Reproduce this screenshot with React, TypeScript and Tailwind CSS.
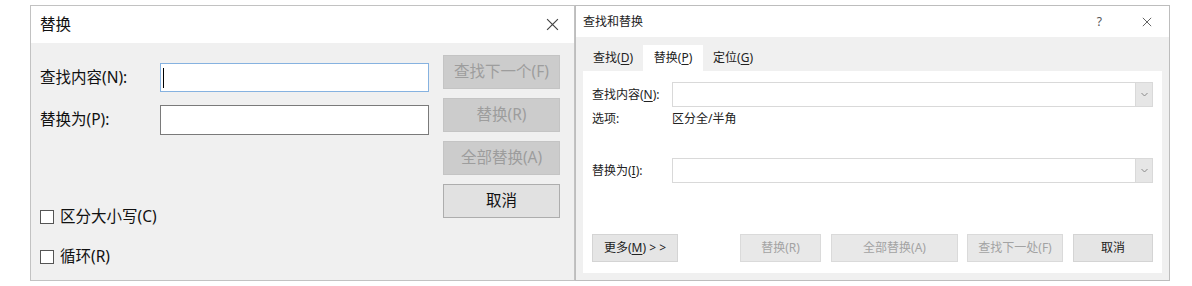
import React from "react";

const font = "font-['Noto_Sans','Noto_Sans_CJK_SC',sans-serif]";

const CloseIcon = ({size, color}: {size: number; color: string}) => (
    <svg width={size} height={size} viewBox="0 0 12 12" fill="none">
        <path d="M1 1L11 11M11 1L1 11" stroke={color} strokeWidth="1.1"/>
    </svg>
);

const Chevron = () => (
    <svg width="7" height="5" viewBox="0 0 7 5" fill="none">
        <path d="M0.5 1L3.5 4L6.5 1" stroke="#8a8a8a" strokeWidth="1"/>
    </svg>
);

// Left: simple Windows "替换" dialog
const ReplaceDialog: React.FC = () => {
    const disabled = ['查找下一个(F)', '替换(R)', '全部替换(A)'];

    return (
        <div className="w-[545px] h-[276px] border border-[#c2c2c2] bg-[#f0f0f0] flex flex-col text-[15.5px] text-[#111]">
            {/* Title bar */}
            <div className="h-[37px] bg-white flex items-center justify-between pl-[9px] pr-[15px] shrink-0">
                <span className="leading-none">替换</span>
                <CloseIcon size={13} color="#444"/>
            </div>

            <div className="flex flex-1">
                {/* Fields + options */}
                <div className="flex flex-col pl-[9px] pt-[20px]">
                    <div className="flex items-center h-[29px]">
                        <span className="w-[120px] leading-none">查找内容(N):</span>
                        <div className="w-[269px] h-[29px] bg-white border border-[#86b2e0] flex items-center pl-[2px]">
                            <div className="w-px h-[20px] bg-black"/>
                        </div>
                    </div>
                    <div className="flex items-center h-[30px] mt-[13px]">
                        <span className="w-[120px] leading-none">替换为(P):</span>
                        <div className="w-[269px] h-[30px] bg-white border border-[#7a7a7a]"/>
                    </div>

                    <label className="flex items-center h-[20px] mt-[72px] gap-[6px]">
                        <span className="w-[14px] h-[14px] border border-[#555] bg-white"/>
                        <span className="leading-none">区分大小写(C)</span>
                    </label>
                    <label className="flex items-center h-[20px] mt-[20px] gap-[6px]">
                        <span className="w-[14px] h-[14px] border border-[#555] bg-white"/>
                        <span className="leading-none">循环(R)</span>
                    </label>
                </div>

                {/* Buttons */}
                <div className="flex flex-col gap-[9px] ml-[14px] pt-[12px]">
                    {disabled.map((label) => (
                        <button
                            key={label}
                            disabled
                            className="w-[117px] h-[34px] bg-[#cccccc] border border-[#c4c4c4] text-[#9d9d9d] leading-none"
                        >
                            {label}
                        </button>
                    ))}
                    <button className="w-[117px] h-[34px] bg-[#e1e1e1] border border-[#adadad] text-[#111] leading-none">
                        取消
                    </button>
                </div>
            </div>
        </div>
    );
};

const Combo = () => (
    <div className="w-[481px] h-[25px] bg-white border border-[#d9d9d9] flex justify-end">
        <div className="w-[17px] h-full bg-[#e6e6e6] border-l border-[#d9d9d9] flex items-center justify-center">
            <Chevron/>
        </div>
    </div>
);

// Right: Word "查找和替换" dialog
const FindReplaceDialog: React.FC = () => {
    const tabs = [
        {label: '查找', key: 'D', active: false},
        {label: '替换', key: 'P', active: true},
        {label: '定位', key: 'G', active: false},
    ];

    return (
        <div className="w-[595px] h-[276px] border border-[#bdbdbd] bg-[#f0f0f0] flex flex-col text-[12px] text-[#222]">
            {/* Title bar */}
            <div className="h-[31px] bg-white flex items-center pl-[7px] shrink-0">
                <span className="leading-none">查找和替换</span>
                <span className="ml-auto text-[#555] leading-none">?</span>
                <span className="ml-[40px] mr-[17px]"><CloseIcon size={10} color="#555"/></span>
            </div>

            <div className="px-[7px] pt-[8px] flex flex-col">
                {/* Tabs */}
                <div className="flex h-[26px]">
                    {tabs.map((tab) => (
                        <div
                            key={tab.key}
                            className={`w-[60px] h-full flex items-center justify-center leading-none ${
                                tab.active ? 'bg-white' : 'bg-[#f0f0f0]'
                            }`}
                        >
                            {tab.label}(<span className="underline underline-offset-2">{tab.key}</span>)
                        </div>
                    ))}
                </div>

                {/* Panel */}
                <div className="w-[579px] h-[202px] bg-white flex flex-col pl-[9px] pt-[11px]">
                    <div className="flex items-center">
                        <span className="w-[80px] leading-none">查找内容(<span className="underline underline-offset-2">N</span>):</span>
                        <Combo/>
                    </div>
                    <div className="flex items-center h-[16px] mt-[4px]">
                        <span className="w-[80px] leading-none">选项:</span>
                        <span className="leading-none">区分全/半角</span>
                    </div>
                    <div className="flex items-center mt-[31px]">
                        <span className="w-[80px] leading-none">替换为(<span className="underline underline-offset-2">I</span>):</span>
                        <Combo/>
                    </div>

                    {/* Buttons */}
                    <div className="flex mt-[51px] h-[28px]">
                        <button className="w-[86px] h-full bg-[#e5e5e5] border border-[#d4d4d4] text-[#222] leading-none">
                            更多(<span className="underline underline-offset-2">M</span>) &gt; &gt;
                        </button>
                        <button disabled className="w-[81px] h-full ml-[62px] bg-[#e8e8e8] border border-[#dadada] text-[#a3a3a3] leading-none">
                            替换(R)
                        </button>
                        <button disabled className="w-[127px] h-full ml-[10px] bg-[#e8e8e8] border border-[#dadada] text-[#a3a3a3] leading-none">
                            全部替换(A)
                        </button>
                        <button disabled className="w-[96px] h-full ml-[9px] bg-[#e8e8e8] border border-[#dadada] text-[#a3a3a3] leading-none">
                            查找下一处(F)
                        </button>
                        <button className="w-[80px] h-full ml-[10px] bg-[#e5e5e5] border border-[#d4d4d4] text-[#222] leading-none">
                            取消
                        </button>
                    </div>
                </div>
            </div>
        </div>
    );
};

export default function App() {
    return (
        <div className={`w-[1192px] h-[286px] bg-white flex pl-[30px] pt-[5px] ${font}`}>
            <ReplaceDialog/>
            <FindReplaceDialog/>
        </div>
    );
}
